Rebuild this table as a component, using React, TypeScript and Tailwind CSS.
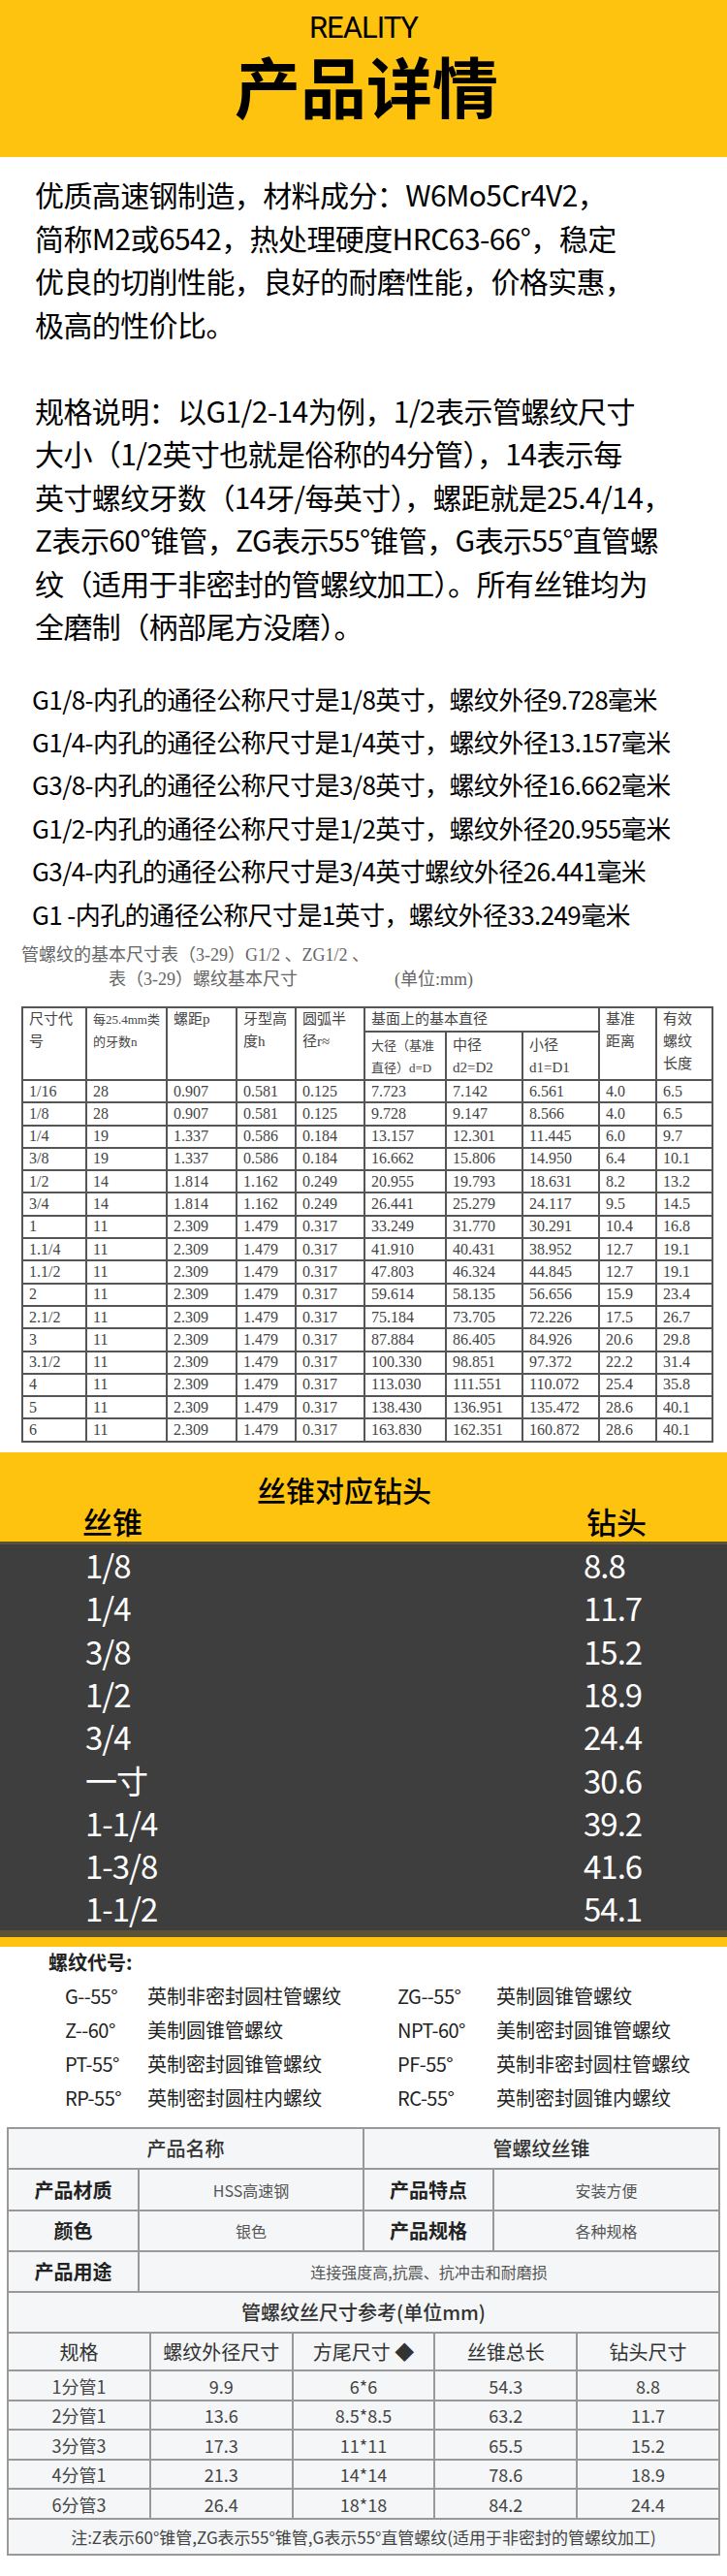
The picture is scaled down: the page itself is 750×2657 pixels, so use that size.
import React from "react";

const threadRows = [
  ["1/16", "28", "0.907", "0.581", "0.125", "7.723", "7.142", "6.561", "4.0", "6.5"],
  ["1/8", "28", "0.907", "0.581", "0.125", "9.728", "9.147", "8.566", "4.0", "6.5"],
  ["1/4", "19", "1.337", "0.586", "0.184", "13.157", "12.301", "11.445", "6.0", "9.7"],
  ["3/8", "19", "1.337", "0.586", "0.184", "16.662", "15.806", "14.950", "6.4", "10.1"],
  ["1/2", "14", "1.814", "1.162", "0.249", "20.955", "19.793", "18.631", "8.2", "13.2"],
  ["3/4", "14", "1.814", "1.162", "0.249", "26.441", "25.279", "24.117", "9.5", "14.5"],
  ["1", "11", "2.309", "1.479", "0.317", "33.249", "31.770", "30.291", "10.4", "16.8"],
  ["1.1/4", "11", "2.309", "1.479", "0.317", "41.910", "40.431", "38.952", "12.7", "19.1"],
  ["1.1/2", "11", "2.309", "1.479", "0.317", "47.803", "46.324", "44.845", "12.7", "19.1"],
  ["2", "11", "2.309", "1.479", "0.317", "59.614", "58.135", "56.656", "15.9", "23.4"],
  ["2.1/2", "11", "2.309", "1.479", "0.317", "75.184", "73.705", "72.226", "17.5", "26.7"],
  ["3", "11", "2.309", "1.479", "0.317", "87.884", "86.405", "84.926", "20.6", "29.8"],
  ["3.1/2", "11", "2.309", "1.479", "0.317", "100.330", "98.851", "97.372", "22.2", "31.4"],
  ["4", "11", "2.309", "1.479", "0.317", "113.030", "111.551", "110.072", "25.4", "35.8"],
  ["5", "11", "2.309", "1.479", "0.317", "138.430", "136.951", "135.472", "28.6", "40.1"],
  ["6", "11", "2.309", "1.479", "0.317", "163.830", "162.351", "160.872", "28.6", "40.1"],
];

const colWidths = [66, 83, 72, 61, 71, 84, 79, 79, 59, 58];

const drillRows = [
  ["1/8", "8.8"],
  ["1/4", "11.7"],
  ["3/8", "15.2"],
  ["1/2", "18.9"],
  ["3/4", "24.4"],
  ["一寸", "30.6"],
  ["1-1/4", "39.2"],
  ["1-3/8", "41.6"],
  ["1-1/2", "54.1"],
];

const codes = [
  ["G--55°", "英制非密封圆柱管螺纹", "ZG--55°", "英制圆锥管螺纹"],
  ["Z--60°", "美制圆锥管螺纹", "NPT-60°", "美制密封圆锥管螺纹"],
  ["PT-55°", "英制密封圆锥管螺纹", "PF-55°", "英制非密封圆柱管螺纹"],
  ["RP-55°", "英制密封圆柱内螺纹", "RC-55°", "英制密封圆锥内螺纹"],
];

const sizeRows = [
  ["1分管1", "9.9", "6*6", "54.3", "8.8"],
  ["2分管1", "13.6", "8.5*8.5", "63.2", "11.7"],
  ["3分管3", "17.3", "11*11", "65.5", "15.2"],
  ["4分管1", "21.3", "14*14", "78.6", "18.9"],
  ["6分管3", "26.4", "18*18", "84.2", "24.4"],
];

const intro = [
  "优质高速钢制造，材料成分：W6Mo5Cr4V2，",
  "简称M2或6542，热处理硬度HRC63-66°，稳定",
  "优良的切削性能，良好的耐磨性能，价格实惠，",
  "极高的性价比。",
];

const spec = [
  "规格说明：以G1/2-14为例，1/2表示管螺纹尺寸",
  "大小（1/2英寸也就是俗称的4分管），14表示每",
  "英寸螺纹牙数（14牙/每英寸），螺距就是25.4/14，",
  "Z表示60°锥管，ZG表示55°锥管，G表示55°直管螺",
  "纹（适用于非密封的管螺纹加工）。所有丝锥均为",
  "全磨制（柄部尾方没磨）。",
];

const sizes = [
  "G1/8-内孔的通径公称尺寸是1/8英寸，螺纹外径9.728毫米",
  "G1/4-内孔的通径公称尺寸是1/4英寸，螺纹外径13.157毫米",
  "G3/8-内孔的通径公称尺寸是3/8英寸，螺纹外径16.662毫米",
  "G1/2-内孔的通径公称尺寸是1/2英寸，螺纹外径20.955毫米",
  "G3/4-内孔的通径公称尺寸是3/4英寸螺纹外径26.441毫米",
  "G1 -内孔的通径公称尺寸是1英寸，螺纹外径33.249毫米",
];

export default function App() {
  const th = "border-2 border-[#555] align-top pl-[6px] text-left font-normal leading-[23px]";
  const td = "border-2 border-[#555] pl-[6px] text-left";
  const cell = "border-2 border-[#999] text-center";

  return (
    <div className="w-[750px] bg-white font-['Noto_Sans_CJK_SC','Noto_Sans',sans-serif] text-black">
      {/* header */}
      <header className="h-[162px] bg-[#fdc30f] flex flex-col items-center pt-[12px]">
        <div className="text-[31px] leading-[34px] tracking-[-1px] font-['Liberation_Sans_Narrow','Roboto',sans-serif]">REALITY</div>
        <h1 className="mt-[4px] text-[68px] leading-[76px] font-bold pl-[6px]">产品详情</h1>
      </header>

      {/* intro text */}
      <section className="pl-[36px] pt-[16px] text-[30px] leading-[44.5px] tracking-[-0.6px] whitespace-nowrap">
        {intro.map((l) => (
          <div key={l}>{l}</div>
        ))}
        <div className="h-[44.5px]" />
        {spec.map((l) => (
          <div key={l}>{l}</div>
        ))}
      </section>

      <section className="pl-[33px] mt-[31px] text-[26px] leading-[44.4px] tracking-[-0.6px] whitespace-nowrap">
        {sizes.map((l) => (
          <div key={l}>{l}</div>
        ))}
      </section>

      {/* pipe thread table */}
      <section className="px-[22px] pt-[8px] text-[#555] font-['Liberation_Serif','Noto_Sans_CJK_SC',serif]">
        <div className="text-[18px] leading-[25px] text-[#666]">管螺纹的基本尺寸表（3-29）G1/2 、ZG1/2 、</div>
        <div className="flex text-[18px] leading-[25px] text-[#666]">
          <span className="pl-[90px] w-[385px]">表（3-29）螺纹基本尺寸</span>
          <span>(单位:mm)</span>
        </div>
        <table className="mt-[15px] w-[712px] table-fixed border-collapse text-[#444]">
          <colgroup>
            {colWidths.map((w, i) => (
              <col key={i} style={{ width: w }} />
            ))}
          </colgroup>
          <thead>
            <tr className="h-[24px]">
              <th rowSpan={2} className={`${th} text-[15px]`}>尺寸代<br />号</th>
              <th rowSpan={2} className={`${th} text-[13px]`}>每25.4mm类<br />的牙数n</th>
              <th rowSpan={2} className={`${th} text-[15px]`}>螺距p</th>
              <th rowSpan={2} className={`${th} text-[15px]`}>牙型高<br />度h</th>
              <th rowSpan={2} className={`${th} text-[15px]`}>圆弧半<br />径r≈</th>
              <th colSpan={3} className={`${th} text-[15px]`}>基面上的基本直径</th>
              <th rowSpan={2} className={`${th} text-[15px]`}>基准<br />距离</th>
              <th rowSpan={2} className={`${th} text-[15px]`}>有效<br />螺纹<br />长度</th>
            </tr>
            <tr className="h-[48px]">
              <th className={`${th} text-[13px] pt-[2px]`}>大径（基准<br />直径）d=D</th>
              <th className={`${th} text-[15px] pt-[2px]`}>中径<br />d2=D2</th>
              <th className={`${th} text-[15px] pt-[2px]`}>小径<br />d1=D1</th>
            </tr>
          </thead>
          <tbody>
            {threadRows.map((r) => (
              <tr key={r[0]} className="h-[23.3px]">
                {r.map((c, i) => (
                  <td key={i} className={`${td} text-[16px] leading-none`}>{c}</td>
                ))}
              </tr>
            ))}
          </tbody>
        </table>
      </section>

      {/* tap / drill section */}
      <section className="mt-[10px]">
        <div className="h-[92px] bg-[#fdc30f] pt-[21px]">
          <div className="pl-[265px] text-[30px] leading-[34px] font-medium">丝锥对应钻头</div>
          <div className="flex text-[31px] leading-[32px] font-medium">
            <span className="pl-[85px] w-[605px]">丝锥</span>
            <span>钻头</span>
          </div>
        </div>
        <div className="bg-[#3e3e3e] border-t-[3px] border-b-[7px] border-[#5d5231] text-white">
          {drillRows.map(([a, b]) => (
            <div key={a} className="flex h-[44.3px] items-center text-[33px] tracking-[-1px]">
              <span className="pl-[88px] w-[602px]">{a}</span>
              <span>{b}</span>
            </div>
          ))}
        </div>
        <div className="h-[10px] bg-[#fdc30f]" />
      </section>

      {/* thread codes */}
      <section className="pt-[4px] text-[#222]">
        <div className="pl-[50px] text-[20px] leading-[24px] font-bold">螺纹代号:</div>
        <div className="mt-[5px]">
          {codes.map((r) => (
            <div key={r[0]} className="flex h-[35px] items-center text-[20px]">
              <span className="pl-[67px] w-[152px] tracking-[-0.5px]">{r[0]}</span>
              <span className="w-[258px]">{r[1]}</span>
              <span className="w-[102px] tracking-[-0.5px]">{r[2]}</span>
              <span>{r[3]}</span>
            </div>
          ))}
        </div>
      </section>

      {/* product table */}
      <section className="px-[7px] pt-[13px] pb-[25px]">
        <table className="w-full table-fixed border-collapse bg-[#f4f6f7]">
          <colgroup>
            <col style={{ width: 135 }} />
            <col style={{ width: 232 }} />
            <col style={{ width: 134 }} />
            <col style={{ width: 233 }} />
          </colgroup>
          <tbody>
            <tr className="h-[42px]">
              <td colSpan={2} className={`${cell} text-[20px] font-medium text-[#333]`}>产品名称</td>
              <td colSpan={2} className={`${cell} text-[20px] font-medium text-[#333]`}>管螺纹丝锥</td>
            </tr>
            <tr className="h-[43px]">
              <td className={`${cell} text-[20px] font-bold text-[#222]`}>产品材质</td>
              <td className={`${cell} text-[16px] text-[#555]`}>HSS高速钢</td>
              <td className={`${cell} text-[20px] font-bold text-[#222]`}>产品特点</td>
              <td className={`${cell} text-[16px] text-[#555]`}>安装方便</td>
            </tr>
            <tr className="h-[42px]">
              <td className={`${cell} text-[20px] font-bold text-[#222]`}>颜色</td>
              <td className={`${cell} text-[16px] text-[#555]`}>银色</td>
              <td className={`${cell} text-[20px] font-bold text-[#222]`}>产品规格</td>
              <td className={`${cell} text-[16px] text-[#555]`}>各种规格</td>
            </tr>
            <tr className="h-[42px]">
              <td className={`${cell} text-[20px] font-bold text-[#222]`}>产品用途</td>
              <td colSpan={3} className={`${cell} text-[16px] text-[#555]`}>连接强度高,抗震、抗冲击和耐磨损</td>
            </tr>
            <tr className="h-[42px]">
              <td colSpan={4} className={`${cell} text-[20px] font-medium text-[#333]`}>管螺纹丝尺寸参考(单位mm)</td>
            </tr>
          </tbody>
        </table>
        <table className="w-full table-fixed border-collapse bg-[#f4f6f7] -mt-[2px]">
          <tbody>
            <tr className="h-[39px]">
              {["规格", "螺纹外径尺寸", "方尾尺寸 ◆", "丝锥总长", "钻头尺寸"].map((h) => (
                <td key={h} className={`${cell} text-[20px] text-[#333]`}>{h}</td>
              ))}
            </tr>
            {sizeRows.map((r) => (
              <tr key={r[0]} className="h-[30.5px]">
                {r.map((c, i) => (
                  <td key={i} className={`${cell} text-[18px] text-[#444] leading-none`}>{c}</td>
                ))}
              </tr>
            ))}
            <tr className="h-[37px]">
              <td colSpan={5} className={`${cell} text-[17px] text-[#444]`}>
                注:Z表示60°锥管,ZG表示55°锥管,G表示55°直管螺纹(适用于非密封的管螺纹加工)
              </td>
            </tr>
          </tbody>
        </table>
      </section>
    </div>
  );
}
